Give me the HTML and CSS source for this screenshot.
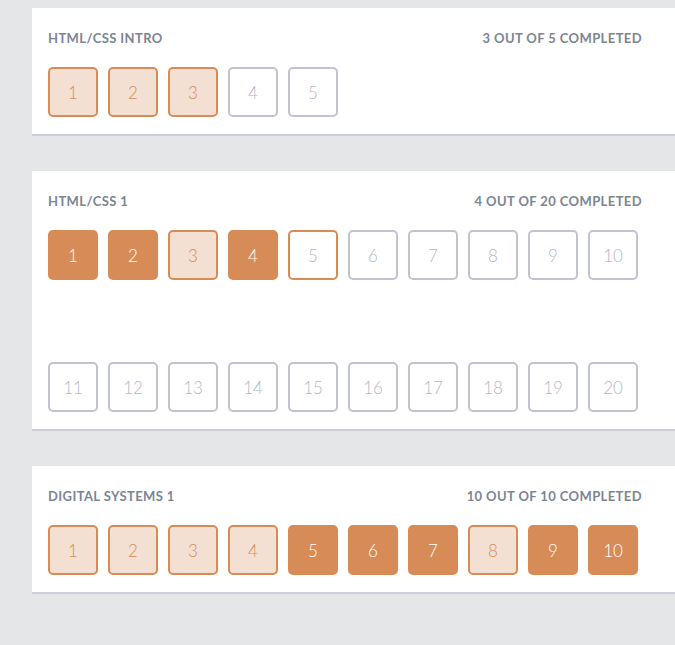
FILE: index.html
```html
<!DOCTYPE html>
<html>
<head>
<meta charset="utf-8">
<link rel="stylesheet" href="styles.css">
</head>
<body>
<div class="page">
  <section class="card">
    <div class="head"><span>HTML/CSS Intro</span><span>3 out of 5 completed</span></div>
    <div class="grid">
      <div class="sq part">1</div>
      <div class="sq part">2</div>
      <div class="sq part">3</div>
      <div class="sq">4</div>
      <div class="sq">5</div>
    </div>
  </section>
  <section class="card">
    <div class="head"><span>HTML/CSS 1</span><span>4 out of 20 completed</span></div>
    <div class="grid tall">
      <div class="sq done">1</div>
      <div class="sq done">2</div>
      <div class="sq part">3</div>
      <div class="sq done">4</div>
      <div class="sq current">5</div>
      <div class="sq">6</div>
      <div class="sq">7</div>
      <div class="sq">8</div>
      <div class="sq">9</div>
      <div class="sq">10</div>
      <div class="sq">11</div>
      <div class="sq">12</div>
      <div class="sq">13</div>
      <div class="sq">14</div>
      <div class="sq">15</div>
      <div class="sq">16</div>
      <div class="sq">17</div>
      <div class="sq">18</div>
      <div class="sq">19</div>
      <div class="sq">20</div>
    </div>
  </section>
  <section class="card">
    <div class="head"><span>Digital Systems 1</span><span>10 out of 10 completed</span></div>
    <div class="grid">
      <div class="sq part">1</div>
      <div class="sq part">2</div>
      <div class="sq part">3</div>
      <div class="sq part">4</div>
      <div class="sq done">5</div>
      <div class="sq done">6</div>
      <div class="sq done">7</div>
      <div class="sq part">8</div>
      <div class="sq done">9</div>
      <div class="sq done">10</div>
    </div>
  </section>
</div>
</body>
</html>
```
FILE: styles.css
```css
html, body {
  margin: 0;
  padding: 0;
  background: #e5e6e8;
  font-family: Lato, "Open Sans", sans-serif;
}
.page {
  padding-top: 8px;
  padding-left: 32px;
  display: flex;
  flex-direction: column;
  gap: 35px;
}
.card {
  background: #fff;
  border-bottom: 2px solid #cdcedb;
  padding: 20px 33px 17px 16px;
}
.head {
  display: flex;
  justify-content: space-between;
  height: 20px;
  line-height: 20px;
  font-size: 13px;
  font-weight: 700;
  color: #7b8594;
  text-transform: uppercase;
  letter-spacing: 0.4px;
}
.grid {
  margin-top: 19px;
  display: grid;
  grid-template-columns: repeat(10, 50px);
  column-gap: 10px;
  row-gap: 82px;
}
.sq {
  box-sizing: border-box;
  width: 50px;
  height: 50px;
  border: 2px solid #c1c3d1;
  border-radius: 5px;
  display: flex;
  align-items: center;
  justify-content: center;
  font-size: 17px;
  font-weight: 300;
  color: #b4b6c8;
  background: #fff;
}
.sq.part {
  border-color: #d78b57;
  background: #f3e0d3;
  color: #d78b57;
}
.sq.done {
  border-color: #d78b57;
  background: #d78b57;
  color: #fff;
}
.sq.current {
  border-color: #d78b57;
}
```
